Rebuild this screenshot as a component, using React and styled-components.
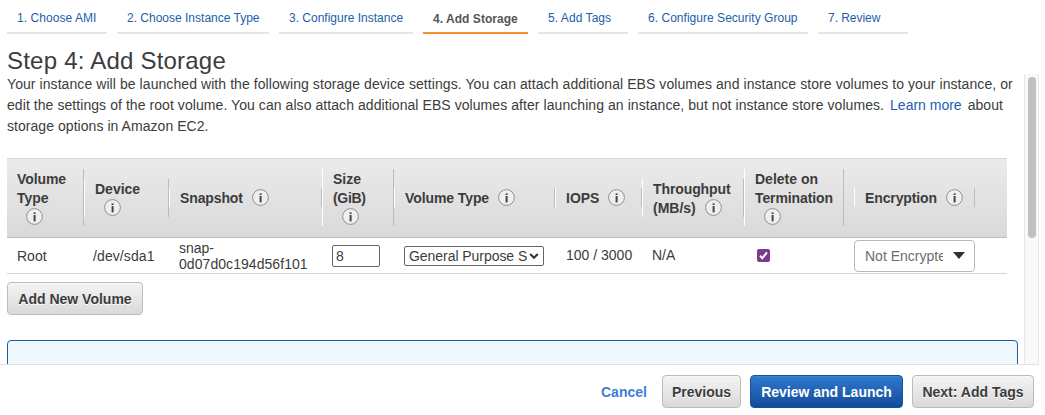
import React from 'react';
import styled, { createGlobalStyle } from 'styled-components';

const GlobalStyle = createGlobalStyle`
  *, *::before, *::after { box-sizing: border-box; }
  body {
    margin: 0;
    background: #fff;
    color: #3c3c3c;
    font-family: "Helvetica Neue", "Liberation Sans", Arial, sans-serif;
    font-size: 14px;
    overflow: hidden;
  }
`;

const Page = styled.div`
  width: 1045px;
  height: 415px;
  display: flex;
  flex-direction: column;
  overflow: hidden;
`;

const Text = styled.span`
  display: block;
  white-space: nowrap;
  letter-spacing: ${(p) => p.$ls || 0}px;
`;

const Steps = styled.nav`
  display: flex;
  gap: 10px;
  height: 34px;
  padding-left: 7px;
  flex: none;
`;

const Step = styled.a`
  width: ${(p) => p.$w}px;
  padding: ${(p) => (p.$active ? 12 : 11)}px 0 0 10px;
  border-bottom: 2px solid ${(p) => (p.$active ? '#f29130' : '#e6e6e6')};
  color: ${(p) => (p.$active ? '#555' : '#1b60a9')};
  font-size: 12px;
  font-weight: ${(p) => (p.$active ? 700 : 400)};
  line-height: 14px;
`;

const Title = styled.h1`
  flex: none;
  height: 40px;
  margin: 0;
  padding: 13px 0 0 7px;
  font-size: 24px;
  font-weight: 400;
  line-height: 28px;
`;

const Main = styled.main`
  display: flex;
  flex: none;
  width: 1039px;
  height: 291px;
  border-bottom: 1px solid #e2e2e2;
  overflow: hidden;
`;

const Content = styled.div`
  width: 1024px;
  padding-left: 7px;
`;

const Intro = styled.div`
  height: 84px;
  line-height: 21px;
`;

const IntroLine = styled.div`
  display: flex;
  gap: ${(p) => p.$gap || 0}px;
`;

const Link = styled.a`
  color: #1c5cb5;
`;

const Grid = styled.div`
  display: grid;
  grid-template-columns: 77px 85px 153px 72px 161px 87px 102px 110px 121px;
  align-items: center;
  width: 1000px;
`;

const HeadRow = styled(Grid)`
  height: 80px;
  padding-bottom: 1px;
  border-top: 1px solid #d4d4d4;
  border-bottom: 1px solid #bdbdbd;
  background: linear-gradient(#ebebeb, #d9d9d9);
  font-weight: 700;
`;

const HeadCell = styled.div`
  width: ${(p) => (p.$w ? `${p.$w}px` : 'auto')};
  margin-top: ${(p) => (p.$two ? 1 : 0)}px;
  padding-left: ${(p) => (p.$first ? 9 : 10)}px;
  border-left: 1px solid ${(p) => (p.$first ? 'transparent' : '#fff')};
  border-right: 1px solid #bcbcbc;
`;

const HeadLine = styled.div`
  display: flex;
  align-items: center;
  height: 19px;
  line-height: 19px;
`;

const HeadText = styled(Text)`
  padding-top: 2px;
`;

const IconSlot = styled.span`
  display: flex;
  width: 17px;
  height: 17px;
  margin-left: 9px;
`;

const BodyRow = styled(Grid)`
  height: 36px;
  border-bottom: 1px solid #d5d5d5;
`;

const Cell = styled.div`
  padding-left: ${(p) => p.$pl}px;
  padding-bottom: ${(p) => p.$pb || 0}px;
  line-height: 16px;
`;

const SizeInput = styled.div`
  width: 48px;
  height: 22px;
  padding: 2px 3px 0;
  border: 1px solid #666;
  border-radius: 2px;
  line-height: 16px;
`;

const TypeSelect = styled.div`
  display: flex;
  align-items: center;
  justify-content: space-between;
  width: 140px;
  height: 20px;
  padding: 0 4px;
  border: 1px solid #666;
  border-radius: 2px;
`;

const Check = styled.div`
  display: flex;
  width: 13px;
  height: 13px;
  border-radius: 2px;
  background: #7c3a8d;
`;

const EncryptionSelect = styled.div`
  display: flex;
  align-items: center;
  justify-content: space-between;
  width: 121px;
  height: 32px;
  padding: 0 9px 0 10px;
  border: 1px solid #b8b8b8;
  border-radius: 4px;
  color: #6c6c6c;
`;

const Clip = styled.div`
  width: 78px;
  overflow: hidden;
`;

const Button = styled.button`
  display: flex;
  align-items: center;
  justify-content: center;
  width: ${(p) => p.$w}px;
  height: 33px;
  padding: 0;
  border: 1px solid ${(p) => (p.$primary ? '#17509c' : '#bcbcbc')};
  border-radius: 4px;
  background: ${(p) =>
    p.$primary ? 'linear-gradient(#3079d0, #124c99)' : 'linear-gradient(#f4f4f4, #d9d9d9)'};
  box-shadow: inset 0 1px 0 ${(p) => (p.$primary ? '#3f83d6' : '#f8f8f8')};
  color: ${(p) => (p.$primary ? '#fff' : '#3c3c3c')};
  font: 700 14px "Helvetica Neue", "Liberation Sans", Arial, sans-serif;
  text-shadow: ${(p) => (p.$primary ? 'none' : '0 1px 0 #fff')};
`;

const Actions = styled.div`
  padding: 8px 0 25px;
`;

const Notice = styled.div`
  width: 1011px;
  height: 60px;
  border: 1px solid #1c5cab;
  border-radius: 4px;
  background: #eff7ff;
`;

const Scrollbar = styled.div`
  width: 15px;
  height: 290px;
  padding: 3px 0 0 3px;
  border: solid #e6e6e6;
  border-width: 0 1px;
  background: #f9f9f9;
`;

const Thumb = styled.div`
  width: 8px;
  height: 161px;
  border-radius: 4px;
  background: #c1c1c1;
`;

const Footer = styled.footer`
  display: flex;
  align-items: flex-start;
  justify-content: flex-end;
  gap: 9px;
  height: 50px;
  padding: 10px 11px 0 0;
`;

const Cancel = styled.a`
  width: 52px;
  color: #3a7fd5;
  font-weight: 700;
  line-height: 34px;
`;

const InfoIcon = () => (
  <IconSlot>
    <svg width="17" height="17" viewBox="0 0 17 17">
      <circle cx="8.5" cy="8.5" r="7.9" fill="#efefef" stroke="#8a8a8a" strokeWidth="0.95" />
      <rect x="7.6" y="4.4" width="2" height="1.6" fill="#444" />
      <rect x="7.6" y="7" width="2" height="6.4" fill="#444" />
    </svg>
  </IconSlot>
);

const steps = [
  { text: '1. Choose AMI', w: 100, ls: 0.06 },
  { text: '2. Choose Instance Type', w: 152, ls: 0 },
  { text: '3. Configure Instance', w: 134, ls: 0 },
  { text: '4. Add Storage', w: 105, ls: 0.04, active: true },
  { text: '5. Add Tags', w: 90, ls: 0.06 },
  { text: '6. Configure Security Group', w: 170, ls: 0.03 },
  { text: '7. Review', w: 90, ls: -0.04 },
];

const columns = [
  { lines: [['Volume', -0.08], ['Type', 0], ['', 0]] },
  { lines: [['Device', 0], ['', 0]] },
  { lines: [['Snapshot', -0.12]] },
  { lines: [['Size', 0], ['(GiB)', -0.3], ['', 0]] },
  { lines: [['Volume Type', -0.09]] },
  { lines: [['IOPS', 0]] },
  { lines: [['Throughput', -0.1], ['(MB/s)', 0]] },
  { lines: [['Delete on', 0], ['Termination', -0.1], ['', 0]], w: 100 },
  { lines: [['Encryption', -0.12]] },
];

export default function App() {
  return (
    <Page>
      <GlobalStyle />
      <Steps>
        {steps.map((s) => (
          <Step key={s.text} $w={s.w} $active={s.active}>
            <Text $ls={s.ls}>{s.text}</Text>
          </Step>
        ))}
      </Steps>
      <Title><Text $ls={0.22}>Step 4: Add Storage</Text></Title>
      <Main>
        <Content>
          <Intro>
            <IntroLine>
              <Text $ls={0.073}>Your instance will be launched with the following storage device settings. You can attach additional EBS volumes and instance store volumes to your instance, or</Text>
            </IntroLine>
            <IntroLine $gap={6}>
              <Text $ls={0.066}>edit the settings of the root volume. You can also attach additional EBS volumes after launching an instance, but not instance store volumes.</Text>
              <Link><Text>Learn more</Text></Link>
              <Text $ls={0.06}>about</Text>
            </IntroLine>
            <IntroLine><Text $ls={0.05}>storage options in Amazon EC2.</Text></IntroLine>
          </Intro>
          <HeadRow>
            {columns.map((c, i) => (
              <HeadCell key={i} $first={i === 0} $two={c.lines.length === 2} $w={c.w}>
                {c.lines.map(([text, ls], j) => (
                  <HeadLine key={j}>
                    {text && <HeadText $ls={ls}>{text}</HeadText>}
                    {j === c.lines.length - 1 && <InfoIcon />}
                  </HeadLine>
                ))}
              </HeadCell>
            ))}
          </HeadRow>
          <BodyRow>
            <Cell $pl={10}><Text>Root</Text></Cell>
            <Cell $pl={9}><Text $ls={0.1}>/dev/sda1</Text></Cell>
            <Cell $pl={10}>
              <Text>snap-</Text>
              <Text $ls={0.06}>0d07d0c194d56f101</Text>
            </Cell>
            <Cell $pl={10}><SizeInput>8</SizeInput></Cell>
            <Cell $pl={10}>
              <TypeSelect>
                <Text $ls={-0.05}>General Purpose S</Text>
                <svg width="10" height="8" viewBox="0 0 10 8">
                  <path d="M1.2 2L5 5.8L8.8 2" fill="none" stroke="#333" strokeWidth="2" />
                </svg>
              </TypeSelect>
            </Cell>
            <Cell $pl={11} $pb={2}><Text>100 / 3000</Text></Cell>
            <Cell $pl={10} $pb={2}><Text>N/A</Text></Cell>
            <Cell $pl={13}>
              <Check>
                <svg width="13" height="13" viewBox="0 0 13 13">
                  <path d="M3 6.8L5.3 9.2L10 3.4" fill="none" stroke="#fff" strokeWidth="2" />
                </svg>
              </Check>
            </Cell>
            <Cell $pl={0}>
              <EncryptionSelect>
                <Clip><Text>Not Encrypted</Text></Clip>
                <svg width="12" height="7" viewBox="0 0 12 7">
                  <path d="M0 0H12L6 7Z" fill="#333" />
                </svg>
              </EncryptionSelect>
            </Cell>
          </BodyRow>
          <Actions>
            <Button $w={136}><Text>Add New Volume</Text></Button>
          </Actions>
          <Notice />
        </Content>
        <Scrollbar><Thumb /></Scrollbar>
      </Main>
      <Footer>
        <Cancel><Text>Cancel</Text></Cancel>
        <Button $w={79}><Text>Previous</Text></Button>
        <Button $w={153} $primary><Text>Review and Launch</Text></Button>
        <Button $w={122}><Text>Next: Add Tags</Text></Button>
      </Footer>
    </Page>
  );
}
